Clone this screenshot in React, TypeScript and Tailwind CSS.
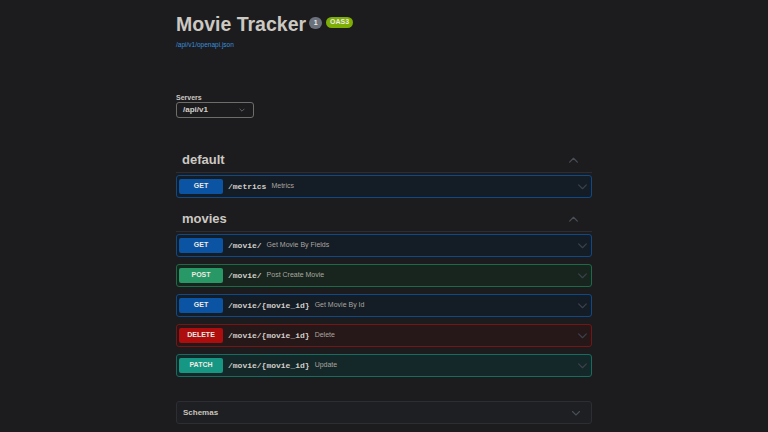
import React from 'react';

type Op = {
  method: string;
  path: string;
  summary: string;
};

const styles: Record<string, { row: string; badge: string }> = {
  GET: {
    row: 'border-[#0f4a87] bg-[#141c26]',
    badge: 'bg-[#0b53a3]',
  },
  POST: {
    row: 'border-[#1d6a48] bg-[#17251e]',
    badge: 'bg-[#289867]',
  },
  DELETE: {
    row: 'border-[#751616] bg-[#261718]',
    badge: 'bg-[#ae0d0d]',
  },
  PATCH: {
    row: 'border-[#176b5f] bg-[#14282a]',
    badge: 'bg-[#169784]',
  },
};

const Chevron = ({ up, className }: { up?: boolean; className?: string }) => (
  <svg
    viewBox="0 0 20 20"
    className={className}
    fill="none"
    stroke="currentColor"
    strokeWidth={2.2}
    strokeLinecap="round"
    strokeLinejoin="round"
  >
    {up ? <path d="M3 13l7-7 7 7" /> : <path d="M3 7l7 7 7-7" />}
  </svg>
);

const OpRow = ({ op }: { op: Op }) => {
  const s = styles[op.method];
  return (
    <div
      className={`mb-[7px] flex h-[23px] items-center rounded-[3px] border pl-[2px] pr-[3px] ${s.row}`}
    >
      <span
        className={`flex h-[15px] w-[44px] items-center justify-center rounded-[2px] text-[7px] font-bold text-[#eeeae4] ${s.badge}`}
      >
        {op.method}
      </span>
      <span className="ml-[5px] font-['Liberation_Mono',monospace] text-[8px] font-bold text-[#d2cec8]">
        {op.path}
      </span>
      <span className="ml-[5px] text-[7px] text-[#aaa59e]">{op.summary}</span>
      <Chevron className="ml-auto h-[11px] w-[11px] text-[#3b414b]" />
    </div>
  );
};

const Tag = ({ name, ops, first }: { name: string; ops: Op[]; first?: boolean }) => (
  <div className={first ? 'mt-[30px]' : 'mt-[9px]'}>
    <div className="mb-[2px] flex h-[25px] items-center border-b border-[#2a2d33] px-[6px]">
      <span className="text-[13px] font-bold text-[#ccc8c2]">{name}</span>
      <Chevron up className="ml-auto mr-[7px] h-[11px] w-[11px] text-[#4a4e55]" />
    </div>
    {ops.map((op, i) => (
      <OpRow key={i} op={op} />
    ))}
  </div>
);

export default function App() {
  const movies: Op[] = [
    { method: 'GET', path: '/movie/', summary: 'Get Movie By Fields' },
    { method: 'POST', path: '/movie/', summary: 'Post Create Movie' },
    { method: 'GET', path: '/movie/{movie_id}', summary: 'Get Movie By Id' },
    { method: 'DELETE', path: '/movie/{movie_id}', summary: 'Delete' },
    { method: 'PATCH', path: '/movie/{movie_id}', summary: 'Update' },
  ];

  return (
    <div className="h-[432px] w-[768px] overflow-hidden bg-[#1c1c1f] font-['Liberation_Sans',Arial,sans-serif]">
      <div className="mx-auto w-[416px] pt-[12px]">
        <div className="flex h-[24px] items-start">
          <h1 className="text-[19.5px] font-bold leading-[24px] text-[#ccc8c2]">Movie Tracker</h1>
          <span className="ml-[3px] mt-[5px] flex h-[12px] w-[13px] items-center justify-center rounded-full bg-[#6b717c] text-[7px] font-bold text-[#eeeae4]">
            1
          </span>
          <span className="ml-[4px] mt-[5px] flex h-[11px] items-center rounded-full bg-[#7cae05] px-[4px] text-[7px] font-bold text-[#eeeae4]">
            OAS3
          </span>
        </div>
        <div className="mt-[4px] text-[6.5px] leading-[10px] text-[#3b8fd9]">/api/v1/openapi.json</div>

        <div className="mt-[43px] text-[7px] font-bold leading-[9px] text-[#ccc8c2]">Servers</div>
        <div className="flex h-[16px] w-[78px] items-center rounded-[3px] border-[1.5px] border-[#6f6d69] pl-[6px] pr-[8px]">
          <span className="text-[8px] font-bold text-[#d2cec8]">/api/v1</span>
          <Chevron className="ml-auto h-[6px] w-[6px] text-[#8a8782]" />
        </div>

        <Tag
          first
          name="default"
          ops={[{ method: 'GET', path: '/metrics', summary: 'Metrics' }]}
        />
        <Tag name="movies" ops={movies} />

        <div className="mt-[24px] flex h-[23px] items-center rounded-[3px] border border-[#2c2e33] bg-[#1e1f22] pl-[6px] pr-[10px]">
          <span className="text-[8px] font-bold text-[#c8c4be]">Schemas</span>
          <Chevron className="ml-auto h-[10px] w-[10px] text-[#4a4e55]" />
        </div>
      </div>
    </div>
  );
}
